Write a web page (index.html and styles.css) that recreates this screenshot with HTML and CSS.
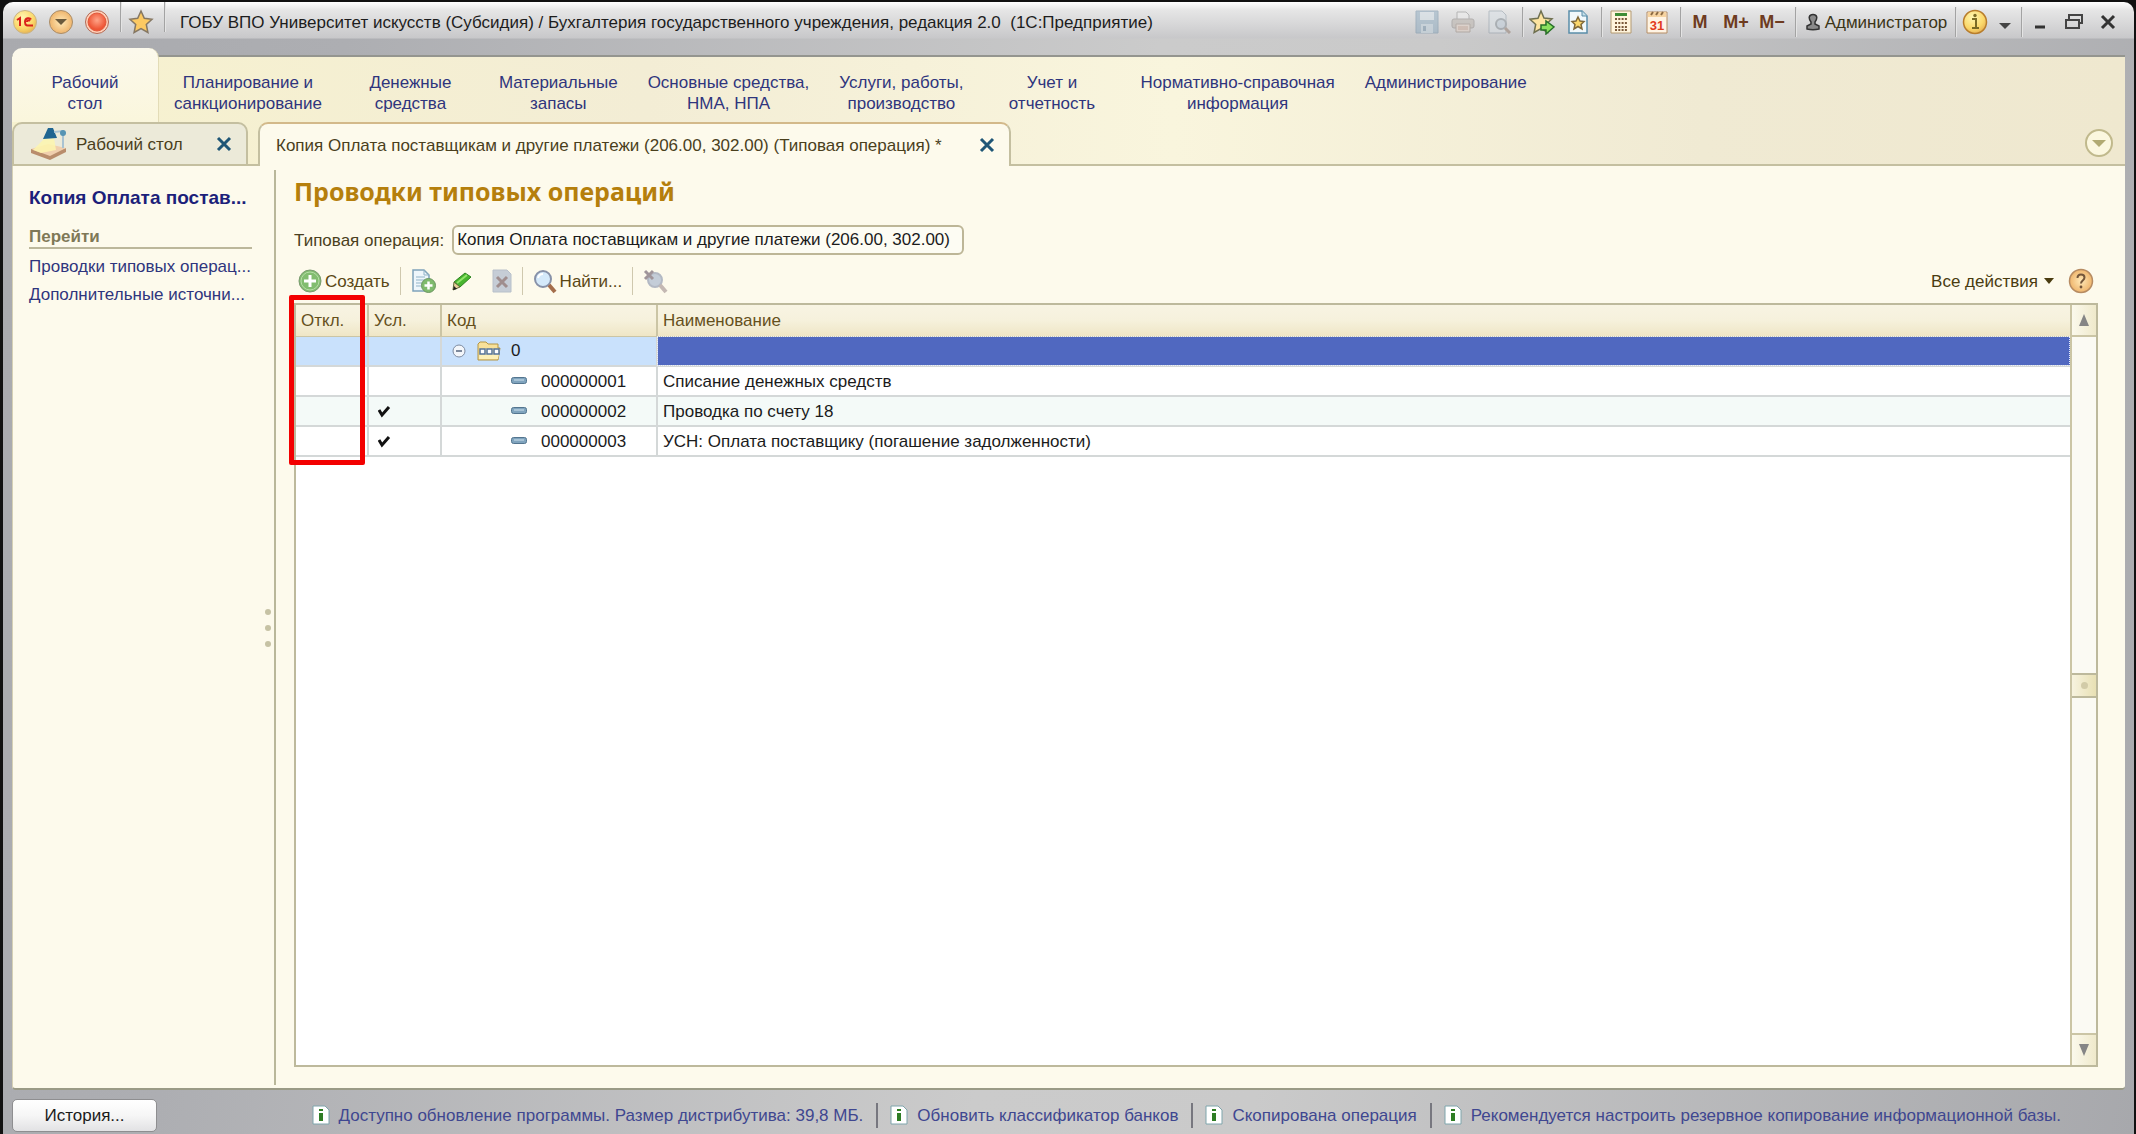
FILE: index.html
```html
<!DOCTYPE html>
<html lang="ru">
<head>
<meta charset="utf-8">
<title>1С:Предприятие</title>
<link rel="stylesheet" href="styles.css">
</head>
<body>
<div class="window">
  <header class="titlebar">
    <button class="icon-btn" aria-label="Меню 1С"><svg width="26" height="26" viewBox="0 0 26 26"><defs><radialGradient id="gold" cx=".4" cy=".3" r=".8"><stop offset="0" stop-color="#fff6b0"/><stop offset=".6" stop-color="#fbd86a"/><stop offset="1" stop-color="#dfa64c"/></radialGradient><radialGradient id="tan"><stop offset="0" stop-color="#ffe9b8"/><stop offset="1" stop-color="#efb56c"/></radialGradient><radialGradient id="red" cx=".5" cy=".4"><stop offset="0" stop-color="#ffa488"/><stop offset="1" stop-color="#ee5535"/></radialGradient></defs><circle cx="13" cy="13" r="11.500" fill="url(#gold)" stroke="#c8b489"/><path d="M5 11l3-2v8M19 10.500c-1-2-6-2-6 2.500s3 3.500 8 3.500M18 12c-1.500-1.500-3 0-3 1" fill="none" stroke="#d9231b" stroke-width="2"/></svg></button>
    <button class="icon-btn" aria-label="Главное меню"><svg width="26" height="26" viewBox="0 0 26 26"><circle cx="13" cy="13" r="11.500" fill="url(#tan)" stroke="#a88d6b"/><path d="M7 10h12l-6 6z" fill="#6b5a3c"/></svg></button>
    <button class="icon-btn" aria-label="Закрыть сеанс"><svg width="26" height="26" viewBox="0 0 26 26"><circle cx="13" cy="13" r="11.500" fill="#ffd0b8" stroke="#b26a55"/><circle cx="13" cy="13" r="9" fill="url(#red)" stroke="#e0593c"/></svg></button>
    <i class="sep"></i>
    <button class="icon-btn fav" aria-label="Избранное"><svg width="26" height="26" viewBox="0 0 26 26"><path d="M13 2l3.300 7.300 7.700.9-5.700 5.300 1.600 8L13 19.500 6.100 23.500l1.600-8L2 10.200l7.700-.9z" fill="#fcc962" stroke="#857763" stroke-width="1.500"/></svg></button>
    <i class="sep"></i>
    <h1 class="caption">ГОБУ ВПО Университет искусств (Субсидия) / Бухгалтерия государственного учреждения, редакция 2.0&nbsp; (1С:Предприятие)</h1>
    <div class="tools">
      <button class="tool faded" aria-label="Сохранить"><svg width="24" height="24" viewBox="0 0 24 24"><path d="M1 1h22v22H1z" fill="#8ba9bf" stroke="#6d8ca5"/><path d="M5 2h14v8H5z" fill="#d3e0e8"/><path d="M6 14h12v9H6z" fill="#bccfdb"/><path d="M8 16h3v5H8z" fill="#6d8ca5"/></svg></button>
      <button class="tool faded" aria-label="Печать"><svg width="24" height="24" viewBox="0 0 24 24"><path d="M6 9V2h9l3 3v4" fill="#eee" stroke="#8a8a8a"/><rect x="1" y="9" width="22" height="9" rx="2" fill="#b8b0a8" stroke="#8a8583"/><path d="M5 14h14v8H5z" fill="#e2cfc2" stroke="#94857a"/><path d="M7 17h10M7 19h10" stroke="#b3846c"/></svg></button>
      <button class="tool faded" aria-label="Просмотр"><svg width="24" height="24" viewBox="0 0 24 24"><path d="M2 1h13l4 4v18H2z" fill="#d9e0e6" stroke="#8b99a5"/><circle cx="14" cy="14" r="5" fill="#bccbd8" stroke="#7e8890" stroke-width="2"/><path d="M18 18l5 5" stroke="#8f7768" stroke-width="3"/></svg></button>
      <i class="sep"></i>
      <button class="tool" aria-label="Добавить в избранное"><svg width="26" height="26" viewBox="0 0 26 26"><path d="M12 2l3 7 8 .9-6 5.300 1.600 8L12 19.500 5.100 23.500l1.600-8L1 10.200l8-1z" fill="#fde4a0" stroke="#6f7050" stroke-width="1.500"/><path d="M12 16h5v-4l8 6-8 7v-4h-5z" fill="#8be05e" stroke="#28702a" stroke-width="1.500"/></svg></button>
      <button class="tool" aria-label="Ссылка"><svg width="24" height="24" viewBox="0 0 24 24"><path d="M3 1h13l5 5v17H3z" fill="#f1f8fb" stroke="#5a8da9" stroke-width="1.500"/><path d="M16 1v5h5" fill="#c4dfe9" stroke="#5a8da9"/><path d="M12 7l2 4 4 .5-3 3 1 4.500-4-2.500L8 19l1-4.500-3-3 4-.5z" fill="#fbd76c" stroke="#80693a" stroke-width="1.500"/></svg></button>
      <i class="sep"></i>
      <button class="tool" aria-label="Калькулятор"><svg width="22" height="24" viewBox="0 0 22 24"><path d="M1 1h20v22H1z" fill="#fff4dc" stroke="#b39a72"/><path d="M5 3h12v3H5z" fill="#3e8c35"/><path d="M5 9h12M5 13h12M5 17h12M5 20h12" stroke="#7b5a3b" stroke-width="2" stroke-dasharray="2 1.300"/></svg></button>
      <button class="tool" aria-label="Календарь"><svg width="22" height="26" viewBox="0 0 22 26"><path d="M1 3h20v21H1z" fill="#fff4e4" stroke="#b58d65"/><path d="M2 3h18v5H2z" fill="#f6d3a0"/><path d="M5 6l2-3M10 6l2-3M15 6l2-3" stroke="#8d6b43" stroke-width="2"/><text x="11" y="21" text-anchor="middle" class="cal-num">31</text></svg></button>
      <i class="sep"></i>
      <button class="tool mem">M</button>
      <button class="tool mem">M+</button>
      <button class="tool mem">M−</button>
      <i class="sep"></i>
      <button class="tool user"><svg width="16" height="18" viewBox="0 0 16 18"><path d="M6 9C3 5 4 1.500 8 1.500s5 3.500 2 7.500v2l4 2v3q-6 1.500-12 0v-3l4-2z" fill="#8a8a8a" stroke="#333" stroke-width="1.500"/></svg><span>Администратор</span></button>
      <i class="sep tight"></i>
      <button class="tool info" aria-label="Справка"><svg width="26" height="26" viewBox="0 0 26 26"><circle cx="13" cy="13" r="11.500" fill="url(#gold)" stroke="#b87d2c" stroke-width="1.500"/><path d="M10 10h4v9m-4 0h7" fill="none" stroke="#7b6a25" stroke-width="2"/><circle cx="13" cy="6.500" r="1.700" fill="#7b6a25"/></svg></button>
      <button class="tool drop" aria-label="Ещё"><svg width="12" height="8" viewBox="0 0 12 8"><path d="M0 1h12L6 7z" fill="#444"/></svg></button>
      <i class="sep"></i>
      <button class="tool win" aria-label="Свернуть"><svg width="20" height="20" viewBox="0 0 20 20"><path d="M5 15h10" stroke="#333" stroke-width="3"/></svg></button>
      <button class="tool win" aria-label="Восстановить"><svg width="20" height="20" viewBox="0 0 20 20"><path d="M5 7V3h13v8h-3" fill="none" stroke="#444" stroke-width="2"/><path d="M2 8h13v8H2z" fill="none" stroke="#444" stroke-width="2"/></svg></button>
      <button class="tool win" aria-label="Закрыть"><svg width="20" height="20" viewBox="0 0 20 20"><path d="M4 4l12 12M16 4L4 16" stroke="#333" stroke-width="3"/></svg></button>
    </div>
  </header>

  <nav class="sections" aria-label="Разделы">
    <a href="#" class="section active">Рабочий<br>стол</a>
    <a href="#" class="section">Планирование и<br>санкционирование</a>
    <a href="#" class="section">Денежные<br>средства</a>
    <a href="#" class="section">Материальные<br>запасы</a>
    <a href="#" class="section">Основные средства,<br>НМА, НПА</a>
    <a href="#" class="section">Услуги, работы,<br>производство</a>
    <a href="#" class="section">Учет и<br>отчетность</a>
    <a href="#" class="section">Нормативно-справочная<br>информация</a>
    <a href="#" class="section">Администрирование</a>
  </nav>

  <div class="tabs">
    <div class="tab">
      <svg width="38" height="34" viewBox="0 0 38 34"><path d="M1 22q9 0 17 5l18-6v4L20 33 1 26z" fill="#b98d6c"/><path d="M1 22l17-5 18 4-16 8z" fill="#f0cfae"/><path d="M14 12l10-1 2 12-15 3-8-3z" fill="#fdf6ae" opacity=".85"/><path d="M18 1h5l4 10-14 1z" fill="#1f6591"/><path d="M24 5l9-1v17" fill="none" stroke="#a9c3d2" stroke-width="2"/><circle cx="33" cy="6" r="3" fill="#5795b4"/></svg>
      <span>Рабочий стол</span>
      <button class="close" aria-label="Закрыть вкладку"><svg width="16" height="16" viewBox="0 0 16 16"><path d="M2 2l12 12M14 2L2 14" stroke="#1f5676" stroke-width="3"/></svg></button>
    </div>
    <div class="tab current">
      <span>Копия Оплата поставщикам и другие платежи (206.00, 302.00) (Типовая операция) *</span>
      <button class="close" aria-label="Закрыть вкладку"><svg width="16" height="16" viewBox="0 0 16 16"><path d="M2 2l12 12M14 2L2 14" stroke="#1f5676" stroke-width="3"/></svg></button>
    </div>
    <div class="tabs-rest"><button class="collapse" aria-label="Список окон"><svg width="14" height="9" viewBox="0 0 14 9"><path d="M0 1h14L7 8z" fill="#b1aa72"/></svg></button></div>
  </div>

  <div class="workspace">
    <aside class="side">
      <a href="#" class="side-title">Копия Оплата постав...</a>
      <h2 class="side-group">Перейти</h2>
      <a href="#" class="side-link">Проводки типовых операц...</a>
      <a href="#" class="side-link">Дополнительные источни...</a>
      <div class="grip"><i></i><i></i><i></i></div>
    </aside>
    <main class="form">
      <h2 class="form-title">Проводки типовых операций</h2>
      <div class="field">
        <label for="op">Типовая операция:</label>
        <input id="op" type="text" value="Копия Оплата поставщикам и другие платежи (206.00, 302.00)">
      </div>
      <div class="toolbar">
        <button class="cmd"><svg width="24" height="24" viewBox="0 0 24 24"><circle cx="12" cy="12" r="11" fill="#82bd70" stroke="#7b9b70"/><circle cx="12" cy="12" r="9" fill="none" stroke="#b7dda7"/><path d="M12 6v12M6 12h12" stroke="#fff" stroke-width="3"/></svg><span>Создать</span></button>
        <i class="tsep"></i>
        <button class="cmd copy" aria-label="Скопировать"><svg width="26" height="26" viewBox="0 0 26 26"><path d="M2 2h11l5 5v16H2z" fill="#eef6fb" stroke="#7fa3ba" stroke-width="1.500"/><path d="M13 2v5h5M5 9h9M5 12h9M5 15h7M5 18h5" fill="none" stroke="#91b3c8"/><circle cx="17.500" cy="17.500" r="7" fill="#7fbb6d" stroke="#6b9660"/><path d="M17.500 13.500v8M13.500 17.500h8" stroke="#fff" stroke-width="2.500"/></svg></button>
        <button class="cmd edit" aria-label="Изменить"><svg width="20" height="22" viewBox="0 0 20 22"><path d="M2 12L13 3l6 4L8 17z" fill="#48b52e" stroke="#2c8320"/><path d="M5 13L15 5" stroke="#91e46a" stroke-width="2"/><path d="M2 12l6 5-7 3z" fill="#e8cf9a" stroke="#5d6a36"/><path d="M1 20l1-4 3 3z" fill="#222"/></svg></button>
        <button class="cmd del" aria-label="Удалить"><svg width="20" height="24" viewBox="0 0 20 24"><path d="M1 1h14l4 4v18H1z" fill="#c6cdd6" stroke="#b8c0ca"/><path d="M5 8l10 10M15 8L5 18" stroke="#a08e8e" stroke-width="3"/></svg></button>
        <i class="tsep"></i>
        <button class="cmd"><svg width="24" height="26" viewBox="0 0 24 26"><circle cx="10" cy="11" r="8" fill="#d4e9fa" stroke="#8791a8" stroke-width="2"/><path d="M5 10q1-4 5-4" fill="none" stroke="#fff" stroke-width="2"/><path d="M16 17l6 7" stroke="#a46d4b" stroke-width="4"/></svg><span>Найти...</span></button>
        <i class="tsep"></i>
        <button class="cmd" aria-label="Отменить поиск"><svg width="26" height="26" viewBox="0 0 26 26"><circle cx="12" cy="12" r="7" fill="#c4cdd8" stroke="#b3b9c4" stroke-width="2"/><path d="M17 17l6 7" stroke="#c4b8b3" stroke-width="4"/><path d="M2 3l8 8M10 3l-8 8" stroke="#a0959a" stroke-width="3"/></svg></button>
        <button class="cmd all"><span>Все действия</span><svg width="10" height="6" viewBox="0 0 10 6"><path d="M0 0h10L5 6z" fill="#4a3c10"/></svg></button>
        <button class="cmd" aria-label="Справка по форме"><svg width="26" height="26" viewBox="0 0 26 26"><circle cx="13" cy="13" r="11.500" fill="url(#tan)" stroke="#b68b62" stroke-width="1.500"/><path d="M9.500 10c0-5 7-4.500 7-.5 0 3-3.500 3-3.500 6" fill="none" stroke="#74563a" stroke-width="2"/><circle cx="13" cy="19" r="1.400" fill="#74563a"/></svg></button>
      </div>
      <div class="grid">
        <div class="grid-body">
          <table>
            <colgroup><col class="c-off"><col class="c-cond"><col class="c-code"><col></colgroup>
            <thead><tr><th>Откл.</th><th>Усл.</th><th>Код</th><th>Наименование</th></tr></thead>
            <tbody>
              <tr class="selected"><td></td><td></td><td><div class="code root"><svg width="16" height="16" viewBox="0 0 16 16"><circle cx="8" cy="8" r="6" fill="#f3f6fa" stroke="#7e8ba0"/><path d="M5 8h6" stroke="#56657c" stroke-width="1.500"/></svg><svg width="26" height="20" viewBox="0 0 26 20"><path d="M2 19V3l2-2h6l2 2h10v4h2l-2 12z" fill="#f7e09a" stroke="#b49545"/><path d="M4 8h20l-2 10H3z" fill="#fdf0b8"/><path d="M4 8h5v5H4zM11 8h5v5h-5zM18 8h5v5h-5z" fill="#fff" stroke="#54739a" stroke-width="1.500"/></svg><span>0</span></div></td><td class="focus"></td></tr>
              <tr><td></td><td></td><td><div class="code"><svg width="16" height="8" viewBox="0 0 16 8"><rect x=".5" y=".5" width="15" height="6" rx="2" fill="#7fa3bd" stroke="#53758f"/><path d="M3 3h10" stroke="#cfe2ee"/></svg><span>000000001</span></div></td><td>Списание денежных средств</td></tr>
              <tr class="alt"><td></td><td><svg class="tick" width="14" height="14" viewBox="0 0 14 14"><path d="M1 6l3 5L11 3" fill="none" stroke="#111" stroke-width="3"/></svg></td><td><div class="code"><svg width="16" height="8" viewBox="0 0 16 8"><rect x=".5" y=".5" width="15" height="6" rx="2" fill="#7fa3bd" stroke="#53758f"/><path d="M3 3h10" stroke="#cfe2ee"/></svg><span>000000002</span></div></td><td>Проводка по счету 18</td></tr>
              <tr><td></td><td><svg class="tick" width="14" height="14" viewBox="0 0 14 14"><path d="M1 6l3 5L11 3" fill="none" stroke="#111" stroke-width="3"/></svg></td><td><div class="code"><svg width="16" height="8" viewBox="0 0 16 8"><rect x=".5" y=".5" width="15" height="6" rx="2" fill="#7fa3bd" stroke="#53758f"/><path d="M3 3h10" stroke="#cfe2ee"/></svg><span>000000003</span></div></td><td>УСН: Оплата поставщику (погашение задолженности)</td></tr>
            </tbody>
          </table>
        </div>
        <div class="scroll">
          <button class="arrow" aria-label="Вверх"><svg width="12" height="12" viewBox="0 0 12 12"><path d="M6 0l5 12H1z" fill="#858585"/></svg></button>
          <div class="track"><div class="thumb"><i></i></div></div>
          <button class="arrow down" aria-label="Вниз"><svg width="12" height="12" viewBox="0 0 12 12"><path d="M6 12l5-12H1z" fill="#858585"/></svg></button>
        </div>
        <div class="highlight"></div>
      </div>
    </main>
  </div>

  <footer class="status">
    <button class="history">История...</button>
    <div class="notes">
      <a href="#"><svg width="18" height="20" viewBox="0 0 18 20"><path d="M1 1h12l4 4v14H1z" fill="#fff" stroke="#7fa5ac"/><path d="M7 8h4v8H7z" fill="#2f7d25"/><path d="M7 4h4v2H7z" fill="#2f7d25"/></svg>Доступно обновление программы. Размер дистрибутива: 39,8 МБ.</a>
      <a href="#"><svg width="18" height="20" viewBox="0 0 18 20"><path d="M1 1h12l4 4v14H1z" fill="#fff" stroke="#7fa5ac"/><path d="M7 8h4v8H7z" fill="#2f7d25"/><path d="M7 4h4v2H7z" fill="#2f7d25"/></svg>Обновить классификатор банков</a>
      <a href="#"><svg width="18" height="20" viewBox="0 0 18 20"><path d="M1 1h12l4 4v14H1z" fill="#fff" stroke="#7fa5ac"/><path d="M7 8h4v8H7z" fill="#2f7d25"/><path d="M7 4h4v2H7z" fill="#2f7d25"/></svg>Скопирована операция</a>
      <a href="#"><svg width="18" height="20" viewBox="0 0 18 20"><path d="M1 1h12l4 4v14H1z" fill="#fff" stroke="#7fa5ac"/><path d="M7 8h4v8H7z" fill="#2f7d25"/><path d="M7 4h4v2H7z" fill="#2f7d25"/></svg>Рекомендуется настроить резервное копирование информационной базы.</a>
    </div>
  </footer>
</div>
</body>
</html>
```
FILE: styles.css
```css
* { box-sizing: border-box; }
html, body { height: 100%; margin: 0; }
body {
  background: #111;
  padding: 2px 2px 0 3px;
  font: 17px/21px "Liberation Sans", Arial, sans-serif;
  color: #222;
  overflow: hidden;
}
button { border: 0; padding: 0; margin: 0; background: none; font: inherit; color: inherit; }
a { color: inherit; text-decoration: none; }
svg { display: block; flex: none; }

.window {
  height: 100%;
  display: flex;
  flex-direction: column;
  padding: 0 9px;
  border-radius: 10px 10px 0 0;
  background: linear-gradient(#fff 0, #e6e6e6 8px, #c8c8ca 36px, rgba(180, 181, 184, 0) 37px),
    linear-gradient(100deg, #a9aaae 0, #adaeb2 15%, #cbcbcb 50%, #cacaca 62%, #a7a8ac 100%);
}

/* Title bar */
.titlebar { display: flex; align-items: center; height: 40px; flex: none; }
.icon-btn { width: 36px; display: flex; justify-content: flex-start; }
.fav { margin-left: 6px; }
.titlebar .sep { width: 2px; height: 30px; background: #a3a3a3; border-right: 1px solid #e4e4e4; align-self: flex-start; }
.caption { margin: 0 0 0 14px; font-size: 17px; font-weight: 400; white-space: nowrap; color: #1d1d1d; }
.tools { margin-left: auto; display: flex; align-items: center; }
.tools .sep { margin-left: 5px; }
.tools .tight { margin-left: 0; }
.tool { height: 28px; display: flex; align-items: center; justify-content: center; width: 36px; }
.faded { opacity: .5; }
.mem { font-size: 18px; font-weight: 700; color: #6e3b20; }
.user { width: 158px; gap: 4px; color: #3b3416; }
.drop { width: 23px; padding-top: 8px; }
.win { width: 34px; }
.cal-num { font: 700 13px "Liberation Sans", Arial, sans-serif; fill: #e23b1d; }

/* Sections */
.sections {
  display: flex;
  flex: none;
  height: 67px;
  margin-top: 13px;
  border-top: 2px solid #94958f;
  background: linear-gradient(90deg, #f7f2cf, #f3edd5 30%, #f9f5dd 55%, #f0ead3 80%, #efe8cf);
  color: #2f357d;
}
.section { min-width: 147px; padding: 15px 15px 0; text-align: center; white-space: nowrap; }
.section.active {
  margin-top: -9px;
  padding-top: 24px;
  border-radius: 10px 10px 0 0;
  background: linear-gradient(#fcf9ec, #faf6dc);
  border-right: 1px solid #e3dcb7;
}

/* Open windows */
.tabs {
  display: flex;
  flex: none;
  height: 44px;
  background: linear-gradient(90deg, #f7f2cf, #f3edd5 30%, #f9f5dd 55%, #f0ead3 80%, #efe8cf);
}
.tab {
  display: flex;
  align-items: center;
  gap: 8px;
  width: 236px;
  padding: 0 14px 0 16px;
  white-space: nowrap;
  color: #4a3f1c;
  background: #ecead9;
  border: 2px solid #c4bfa0;
  border-radius: 10px 10px 0 0;
}
.tab .close { margin-left: auto; }
.tab.current {
  position: relative;
  width: 753px;
  margin-left: 10px;
  background: #fdfaec;
  border-top-color: #d3b98a;
  border-bottom: 0;
}
.tab.current::before {
  content: "";
  position: absolute;
  left: -13px;
  bottom: 0;
  width: 11px;
  height: 2px;
  background: #c4bfa0;
}
.tabs-rest { flex: 1; display: flex; align-items: center; justify-content: flex-end; padding-right: 12px; border-bottom: 2px solid #c4bfa0; }
.collapse { width: 28px; height: 28px; border: 2px solid #c0b98c; border-radius: 50%; background: #fbf7df; display: flex; align-items: center; justify-content: center; }

/* Workspace */
.workspace { flex: 1; min-height: 0; display: flex; background: #fdfaec; border-bottom: 2px solid #9a9a86; border-left: 1px solid #d5d0b5; border-radius: 0 0 4px 4px; }
.side { position: relative; width: 263px; margin: 4px 0 3px; padding: 17px 22px 0 16px; border-right: 2px solid #b9b79a; white-space: nowrap; color: #2f357d; }
.side a { display: block; }
.side-title { font-size: 19px; font-weight: 700; color: #1c1f7a; }
.side-group { margin: 18px 0 7px; font-size: 17px; line-height: 21px; color: #7f7857; border-bottom: 2px solid #bcb79b; }
.side-link { margin-bottom: 7px; }
.grip { position: absolute; right: 3px; top: 50%; display: grid; gap: 10px; margin-top: -19px; }
.grip i { width: 6px; height: 6px; border-radius: 50%; background: #c6c2a4; }

.form { flex: 1; min-width: 0; display: flex; flex-direction: column; padding: 8px 27px 21px 18px; }
.form-title { margin: 0; font: 700 25px/34px "Noto Sans", sans-serif; color: #b57f0c; }
.field { display: flex; align-items: center; gap: 8px; margin-top: 17px; color: #4a4020; }
.field input {
  width: 512px;
  height: 30px;
  padding: 0 3px;
  border: 2px solid #bdb697;
  border-radius: 6px;
  background: #fdfcf3;
  font: inherit;
  color: #1b1b1b;
}
.toolbar { display: flex; align-items: center; height: 48px; padding: 4px 4px 0; color: #5a4715; }
.cmd { display: flex; align-items: center; gap: 3px; height: 28px; }
.tsep { width: 1px; height: 28px; margin: 0 10px; background: #cfc8ae; }
.edit { margin-left: 15px; }
.del { margin-left: 20px; }
.all { margin-left: auto; margin-right: 14px; gap: 6px; color: #4a3c10; }

/* Grid */
.grid { position: relative; flex: 1; min-height: 0; display: flex; border: 2px solid #bdb99c; background: #fff; }
.grid-body { flex: 1; min-width: 0; }
table { width: 100%; border-collapse: collapse; table-layout: fixed; }
.c-off { width: 72px; }
.c-cond { width: 73px; }
.c-code { width: 216px; }
th { height: 31px; padding: 0 5px; text-align: left; font-weight: 400; color: #65501c; background: linear-gradient(#f8f4e3, #f6f1dc 50%, #efe6c6); border-right: 2px solid #cbc5a5; border-bottom: 1px solid #cbc5a5; }
td { height: 30px; padding: 0 5px; border-right: 2px solid #d4d8d8; border-bottom: 2px solid #d4d8d8; color: #1b1b1b; }
th:last-child, td:last-child { border-right: 0; }
.selected td { background: #c9e1fc; }
.selected .focus { background: #5068c0; outline: 1px dotted #e8eefc; outline-offset: -1px; }
.alt td { background: #f4faf8; }
.code { display: flex; align-items: center; gap: 14px; padding-left: 64px; }
.code.root { padding-left: 4px; gap: 9px; }
.tick { margin-left: 4px; }

.scroll { width: 26px; display: flex; flex-direction: column; border-left: 2px solid #cbc5a5; background: #fbfaf3; }
.arrow { height: 32px; display: flex; align-items: center; justify-content: center; background: linear-gradient(90deg, #fbf9ec, #efe9cb); border-bottom: 2px solid #cbc5a5; }
.arrow.down { border-bottom: 0; border-top: 2px solid #cbc5a5; }
.track { flex: 1; display: flex; align-items: center; }
.thumb { width: 100%; height: 25px; display: flex; align-items: center; justify-content: center; background: linear-gradient(90deg, #f7f3df, #e8e0b4); border: solid #bdb99c; border-width: 2px 0; }
.thumb i { width: 7px; height: 7px; border-radius: 50%; background: #d2cba8; }
.highlight { position: absolute; left: -7px; top: -10px; width: 76px; height: 170px; border: 5px solid #f30000; border-radius: 2px; }

/* Status bar */
.status { flex: none; display: flex; align-items: center; height: 44px; padding-top: 6px; color: #3f4790; }
.history { width: 145px; height: 33px; border: 1px solid #8e8e90; border-radius: 5px; background: linear-gradient(#fff, #f6f6f6 50%, #e2e2e4); color: #1b1b1b; }
.notes { margin-left: auto; margin-right: 64px; display: flex; white-space: nowrap; }
.notes a { display: flex; align-items: center; gap: 9px; padding: 2px 13px 2px 12px; border-right: 2px solid #77777f; }
.notes a:last-child { border-right: 0; padding-right: 0; }
```
